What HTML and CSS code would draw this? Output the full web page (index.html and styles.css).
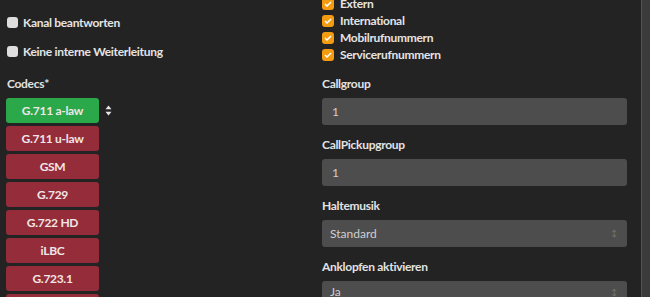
FILE: index.html
```html
<!DOCTYPE html>
<html lang="de">
<head>
  <meta charset="UTF-8">
  <title>Nebenstelle bearbeiten</title>
  <link rel="stylesheet" href="styles.css">
</head>
<body>
  <div class="page">
    <div class="content">
      <div class="col left-col">
        <label class="check-row"><span class="box"></span>Kanal beantworten</label>
        <label class="check-row"><span class="box"></span>Keine interne Weiterleitung</label>

        <div class="field-label codecs-label">Codecs*</div>
        <div class="codec-list">
          <div class="codec-row">
            <div class="codec on">G.711 a-law</div>
            <svg class="sort-icon" width="7" height="11" viewBox="0 0 7 11">
              <path d="M3.5 0.5 L6.5 4.3 L0.5 4.3 Z M3.5 10.5 L6.5 6.7 L0.5 6.7 Z" fill="#e6e6e6"/>
            </svg>
          </div>
          <div class="codec off">G.711 u-law</div>
          <div class="codec off">GSM</div>
          <div class="codec off">G.729</div>
          <div class="codec off">G.722 HD</div>
          <div class="codec off">iLBC</div>
          <div class="codec off">G.723.1</div>
          <div class="codec off"></div>
        </div>
      </div>

      <div class="col right-col">
        <div class="perm-list">
          <label class="perm-row"><span class="obox"><svg width="8" height="6" viewBox="0 0 8 6"><path d="M1 3 L3 5 L7 1" stroke="#fff" stroke-width="1.5" fill="none"/></svg></span>Extern</label>
          <label class="perm-row"><span class="obox"><svg width="8" height="6" viewBox="0 0 8 6"><path d="M1 3 L3 5 L7 1" stroke="#fff" stroke-width="1.5" fill="none"/></svg></span>International</label>
          <label class="perm-row"><span class="obox"><svg width="8" height="6" viewBox="0 0 8 6"><path d="M1 3 L3 5 L7 1" stroke="#fff" stroke-width="1.5" fill="none"/></svg></span>Mobilrufnummern</label>
          <label class="perm-row"><span class="obox"><svg width="8" height="6" viewBox="0 0 8 6"><path d="M1 3 L3 5 L7 1" stroke="#fff" stroke-width="1.5" fill="none"/></svg></span>Servicerufnummern</label>
        </div>

        <div class="group">
          <div class="field-label">Callgroup</div>
          <div class="input">1</div>
        </div>
        <div class="group">
          <div class="field-label">CallPickupgroup</div>
          <div class="input">1</div>
        </div>
        <div class="group">
          <div class="field-label">Haltemusik</div>
          <div class="input select">Standard<span class="arrows">&#8597;</span></div>
        </div>
        <div class="group">
          <div class="field-label">Anklopfen aktivieren</div>
          <div class="input select last">Ja<span class="arrows">&#8597;</span></div>
        </div>
      </div>
    </div>
    <div class="scrollbar"></div>
  </div>
</body>
</html>
```

FILE: styles.css
```css
body {
  margin: 0;
  background: #232323;
  font-family: Lato, "Open Sans", sans-serif;
  font-size: 12px;
  font-weight: bold;
  letter-spacing: -0.3px;
  color: #dcdcdc;
  overflow: hidden;
}

.page {
  display: flex;
  height: 297px;
  overflow: hidden;
}

.content {
  flex: 1;
  display: grid;
  grid-template-columns: 305px 305px;
  column-gap: 10px;
  padding-left: 7px;
}

.scrollbar {
  width: 8px;
  background: #3b3b3b;
  border-left: 1px solid #555;
}

/* left column */
.left-col {
  padding-top: 13px;
}

.check-row {
  display: flex;
  align-items: center;
  gap: 5px;
  height: 18px;
  margin-bottom: 11px;
  color: #e4e4e4;
}

.box {
  width: 11px;
  height: 11px;
  background: #dedede;
  border-radius: 3px;
}

.field-label {
  height: 18px;
  line-height: 18px;
  color: #e2e2e2;
  margin-bottom: 5px;
}

.codecs-label {
  margin-top: 15px;
}

.codec-list {
  display: flex;
  flex-direction: column;
  gap: 3px;
}

.codec-row {
  display: flex;
  align-items: center;
  gap: 6px;
}

.codec {
  width: 93px;
  height: 25px;
  line-height: 25px;
  text-align: center;
  border-radius: 3px;
  color: #f1e6e6;
  margin-left: -1px;
}

.codec.on {
  background: #2aa84a;
}

.codec.off {
  background: #952c3a;
}

/* right column */
.perm-list {
  margin-top: -5px;
  margin-bottom: 12px;
}

.perm-row {
  display: flex;
  align-items: center;
  gap: 6px;
  height: 17px;
  color: #e4e4e4;
}

.obox {
  width: 12px;
  height: 12px;
  background: #f39c12;
  border-radius: 3px;
  display: flex;
  align-items: center;
  justify-content: center;
}

.group {
  margin-bottom: 11px;
}

.input {
  height: 27px;
  line-height: 27px;
  background: #4d4d4d;
  border-radius: 3px;
  padding-left: 10px;
  color: #cfcfcf;
  font-weight: normal;
  letter-spacing: 0;
  position: relative;
}

.select {
  padding-left: 8px;
}

.select.last {
  line-height: 22px;
}

.arrows {
  position: absolute;
  right: 10px;
  top: 0;
  font-size: 8px;
  color: #777;
}
```
